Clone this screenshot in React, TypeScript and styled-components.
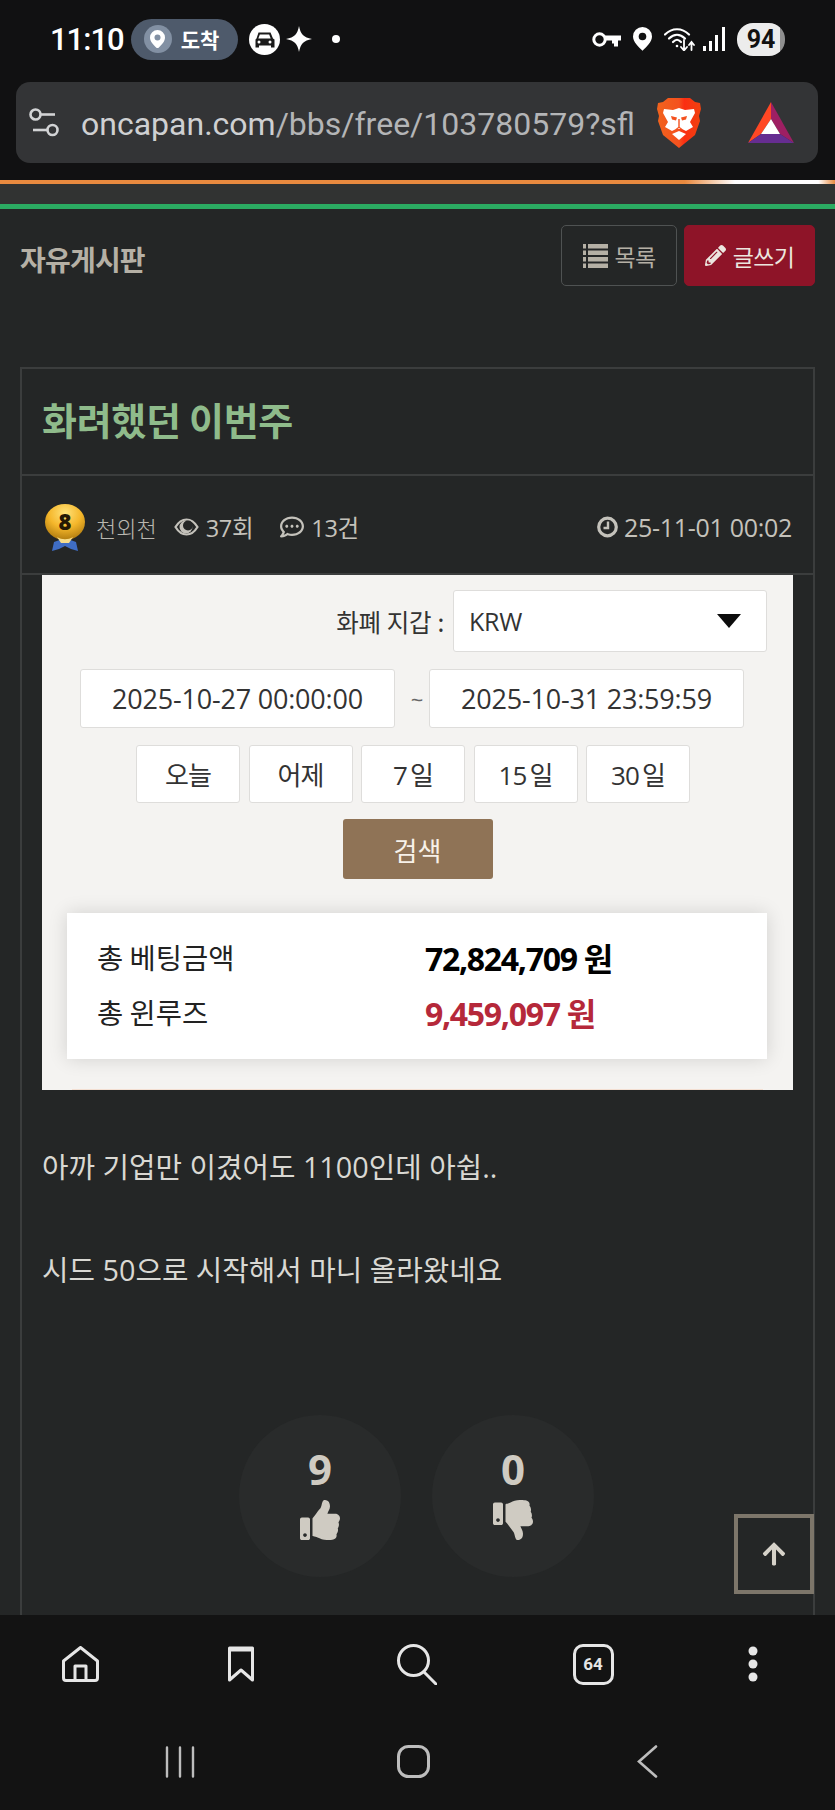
import React from 'react';
import styled, { createGlobalStyle } from 'styled-components';
import {
  FaArrowUp,
  FaPencilAlt,
  FaRegCommentDots,
  FaThumbsDown,
  FaThumbsUp,
} from 'react-icons/fa';

const sans = `"Open Sans", "Noto Sans CJK KR", sans-serif`;
const korean = `"Noto Sans CJK KR", sans-serif`;

const GlobalStyle = createGlobalStyle`
  html, body {
    margin: 0;
    padding: 0;
    background: #131313;
  }
  * {
    box-sizing: border-box;
  }
`;

const Page = styled.div`
  width: 835px;
  height: 1810px;
  display: flex;
  flex-direction: column;
  overflow: hidden;
  background: #242626;
  font-family: ${sans};
`;

/* system status bar */
const Chrome = styled.header`
  height: 180px;
  flex: none;
  background: #111112;
`;

const StatusBar = styled.div`
  height: 82px;
  padding: 0 50px 4px;
  display: flex;
  align-items: center;
  color: #fff;
`;

const Clock = styled.span`
  font-family: Roboto, sans-serif;
  font-weight: 500;
  font-size: 31px;
  letter-spacing: -1px;
  margin-right: 7px;
`;

const ArrivalPill = styled.div`
  width: 107px;
  height: 41px;
  border-radius: 21px;
  background: #4e5a6b;
  padding-left: 13px;
  display: flex;
  align-items: center;
  gap: 9px;
  font-family: ${korean};
  font-weight: 700;
  font-size: 21px;
  margin-right: 11px;
`;

const PinBubble = styled.span`
  width: 28px;
  height: 28px;
  border-radius: 50%;
  background: #8290a3;
  display: flex;
  align-items: center;
  justify-content: center;
`;

const StatusLeftIcons = styled.div`
  display: flex;
  align-items: center;
  gap: 6px;
`;

const Dot = styled.span`
  width: 8px;
  height: 8px;
  margin-left: 20px;
  border-radius: 50%;
  background: #fff;
`;

const StatusRight = styled.div`
  margin-left: auto;
  display: flex;
  align-items: center;
`;

const StatusSpacer = styled.span<{ $width: number }>`
  width: ${(p) => p.$width}px;
`;

const Battery = styled.span`
  width: 48px;
  height: 33px;
  margin-left: 12px;
  border-radius: 16px;
  background: linear-gradient(90deg, #ececec 90%, #8f8f8f 90%);
  color: #111;
  font-family: Roboto, sans-serif;
  font-weight: 700;
  font-size: 25px;
  display: flex;
  align-items: center;
  justify-content: center;
`;

/* browser address bar */
const UrlBar = styled.div`
  height: 81px;
  margin: 0 17px 0 16px;
  border-radius: 14px;
  background: #333436;
  display: flex;
  align-items: center;
  padding-left: 13px;
`;

const UrlText = styled.div`
  width: 555px;
  margin-left: 21px;
  padding-top: 2px;
  overflow: hidden;
  white-space: nowrap;
  font-family: Roboto, sans-serif;
  font-size: 32px;
  color: #b4b5b7;
`;

const UrlHost = styled.span`
  color: #cfd0d2;
`;

const BraveSlot = styled.span`
  margin-left: 21px;
  display: flex;
`;

const BatSlot = styled.span`
  margin-left: 47px;
  display: flex;
`;

const LoadLine = styled.div`
  height: 4px;
  flex: none;
  background: linear-gradient(
    90deg,
    #e98a3f 0,
    #e98a3f 82%,
    #fff 88%,
    #fff 98%,
    #e98a3f 100%
  );
`;

const SiteStrip = styled.div`
  height: 25px;
  flex: none;
  background: #313332;
  border-bottom: 5px solid #2bab62;
`;

/* board page */
const Content = styled.main`
  position: relative;
  flex: 1;
  min-height: 0;
  overflow: hidden;
  padding: 16px 20px 0;
`;

const BoardHeader = styled.div`
  display: flex;
  align-items: center;
  height: 61px;
  margin-bottom: 81px;
`;

const BoardName = styled.h2`
  margin: 0 auto 0 0;
  padding-top: 6px;
  font-family: ${korean};
  font-weight: 700;
  font-size: 28px;
  letter-spacing: -0.8px;
  color: #b5b0a5;
`;

const ActionButton = styled.a<{ $primary?: boolean }>`
  height: 61px;
  display: flex;
  align-items: center;
  justify-content: center;
  gap: 7px;
  width: ${(p) => (p.$primary ? '131px' : '116px')};
  margin-left: ${(p) => (p.$primary ? '7px' : '0')};
  border-radius: 5px;
  border: 1.5px solid ${(p) => (p.$primary ? '#8e1428' : '#4f5252')};
  background: ${(p) => (p.$primary ? '#8e1428' : 'transparent')};
  color: ${(p) => (p.$primary ? '#ece6df' : '#b5b0a5')};
  font-family: ${korean};
  font-size: 23px;
  letter-spacing: -0.7px;
`;

const PostCard = styled.article`
  width: 795px;
  min-height: 1400px;
  border: 2px solid #3b3d3d;
`;

const PostTitle = styled.h1`
  margin: 0;
  height: 107px;
  padding: 0 0 6px 20px;
  display: flex;
  align-items: center;
  border-bottom: 2px solid #3b3d3d;
  font-family: ${korean};
  font-weight: 700;
  font-size: 38px;
  letter-spacing: -0.3px;
  color: #8fbb8b;
`;

const PostMeta = styled.div`
  height: 99px;
  padding: 5px 21px 0 23px;
  display: flex;
  align-items: center;
  border-bottom: 2px solid #3b3d3d;
  color: #b9b7b0;
`;

const Author = styled.span`
  margin: 0 17px 0 11px;
  font-family: ${korean};
  font-size: 22px;
  font-weight: 300;
`;

const MetaItem = styled.span`
  display: flex;
  align-items: center;
  gap: 7px;
  margin-right: 27px;
  font-size: 23.5px;
  letter-spacing: -0.3px;
  color: #c4c2bb;
`;

const PostDate = styled(MetaItem)`
  margin: 0 0 0 auto;
  gap: 6px;
  font-size: 25px;
`;

const PostBody = styled.div`
  padding: 0 20px;
`;

/* bet history capture embedded in the post */
const Capture = styled.div`
  width: 751px;
  height: 515px;
  padding-top: 15px;
  display: flex;
  flex-direction: column;
  background: #f4f3f1;
  color: #333;
`;

const CaptureEdge = styled.div`
  height: 1px;
  margin: auto 30px 0;
  background: #f3dfd2;
`;

const WalletRow = styled.div`
  display: flex;
  align-items: center;
  justify-content: flex-end;
  gap: 9px;
  padding-right: 26px;
  font-family: ${korean};
  font-size: 24.5px;
  letter-spacing: -0.3px;
  word-spacing: 1px;
`;

const Field = styled.div`
  background: #fff;
  border: 1.5px solid #dedddb;
  border-radius: 3px;
  display: flex;
  align-items: center;
`;

const WalletSelect = styled(Field)`
  width: 314px;
  height: 62px;
  padding: 0 25px 0 15px;
  justify-content: space-between;
  font-family: ${sans};
  font-size: 25px;
`;

const SelectCaret = styled.span`
  width: 0;
  height: 0;
  border-left: 12px solid transparent;
  border-right: 12px solid transparent;
  border-top: 14px solid #0c0c0c;
`;

const DateRow = styled.div`
  display: flex;
  align-items: center;
  margin: 17px 0 0 38px;
`;

const DateField = styled(Field)`
  width: 315px;
  height: 59px;
  justify-content: center;
  font-size: 27px;
  letter-spacing: -0.2px;
`;

const Tilde = styled.span`
  width: 34px;
  padding-left: 10px;
  text-align: center;
  font-size: 22px;
  color: #666;
`;

const QuickRow = styled.div`
  display: flex;
  gap: 8.5px;
  margin: 17px 0 0 94px;
`;

const QuickButton = styled(Field)`
  width: 104px;
  height: 58px;
  justify-content: center;
  font-family: ${sans}, ${korean};
  font-size: 26px;
  letter-spacing: -0.8px;
  word-spacing: -3px;
`;

const SearchButton = styled.div`
  width: 150px;
  height: 60px;
  margin: 16px auto 0;
  border-radius: 3px;
  background: #8f7356;
  color: #f7f1e9;
  font-family: ${korean};
  font-size: 26px;
  display: flex;
  align-items: center;
  justify-content: center;
`;

const Summary = styled.div`
  width: 700px;
  height: 146px;
  margin: 34px 0 0 25px;
  padding: 16px 30px;
  background: #fff;
  box-shadow: 0 0 18px rgba(0, 0, 0, 0.14);
  display: grid;
  grid-template-columns: 328px 1fr;
  grid-auto-rows: 55px;
  align-items: center;
  color: #222;
`;

const SummaryLabel = styled.span`
  font-family: ${korean};
  font-size: 28.5px;
`;

const SummaryValue = styled.span<{ $loss?: boolean }>`
  font-weight: 700;
  font-size: 32px;
  letter-spacing: -1.3px;
  color: ${(p) => (p.$loss ? '#b5283a' : '#000')};
`;

const PostText = styled.div`
  margin-top: 51px;
  display: flex;
  flex-direction: column;
  gap: 51px;
`;

const TextLine = styled.p`
  margin: 0;
  font-size: 28.8px;
  line-height: 52px;
  color: #d9d8d3;
  white-space: nowrap;
`;

const Votes = styled.div`
  margin-top: 119px;
  padding-right: 2px;
  display: flex;
  justify-content: center;
  gap: 31px;
`;

const VoteButton = styled.div`
  width: 162px;
  height: 162px;
  border-radius: 50%;
  background: #292b2b;
  color: #cfcbc2;
  display: flex;
  flex-direction: column;
  align-items: center;
  padding-top: 26px;
  gap: 3px;
`;

const VoteCount = styled.span`
  font-weight: 700;
  font-size: 42px;
  line-height: 56px;
`;

const ScrollTop = styled.a`
  position: absolute;
  right: 21px;
  bottom: 21px;
  width: 80px;
  height: 80px;
  border: 4px solid #7d766a;
  background: #242626;
  color: #d6d2c9;
  display: flex;
  align-items: center;
  justify-content: center;
`;

/* browser toolbar and system navigation */
const BottomArea = styled.footer`
  height: 195px;
  flex: none;
  background: #131313;
  color: #e6e6e6;
`;

const Toolbar = styled.nav`
  height: 98px;
  padding-left: 58px;
  display: grid;
  grid-template-columns: 161px 176px 176px 160px 44px;
  align-items: center;
`;

const ToolbarSlot = styled.span`
  width: 44px;
  height: 44px;
  display: flex;
  align-items: center;
  justify-content: center;
`;

const TabCount = styled.span`
  width: 41px;
  height: 41px;
  border: 3px solid #e6e6e6;
  border-radius: 10px;
  font-family: Roboto, sans-serif;
  font-weight: 700;
  font-size: 17px;
  display: flex;
  align-items: center;
  justify-content: center;
`;

const SystemNav = styled.nav`
  height: 97px;
  padding: 0 168px 0 160px;
  display: flex;
  align-items: center;
  justify-content: space-between;
  color: #bdbdbd;
`;

const NavSlot = styled.span`
  width: 40px;
  display: flex;
  justify-content: center;
`;

const MapPin = ({ size = 18, color = '#fff', hole = '#8290a3' }) => (
  <svg width={size} height={size * 1.25} viewBox="0 0 20 25">
    <path d="M10 0a10 10 0 0 1 10 10c0 6-6 11-10 15C6 21 0 16 0 10A10 10 0 0 1 10 0z" fill={color} />
    <circle cx="10" cy="10" r="4" fill={hole} />
  </svg>
);

const CarBadge = () => (
  <svg width="31" height="31" viewBox="0 0 31 31">
    <circle cx="15.5" cy="15.5" r="15.5" fill="#fff" />
    <path d="M9.5 8.5h12l2.5 6 1.5 1v8h-3.5v-2h-12v2H6.500v-8l1-1z" fill="#1b1b1b" />
    <path d="M10.800 10.500h9.400l1.500 4H9.300z" fill="#fff" />
    <circle cx="10" cy="18" r="1.500" fill="#fff" />
    <circle cx="21" cy="18" r="1.500" fill="#fff" />
  </svg>
);

const Sparkle = () => (
  <svg width="26" height="26" viewBox="0 0 26 26">
    <path d="M13 0c1.500 8 4.500 11.500 13 13-8.500 1.500-11.500 5-13 13-1.500-8-4.500-11.500-13-13C8.500 11.500 11.500 8 13 0z" fill="#fff" />
  </svg>
);

const KeyIcon = () => (
  <svg width="29" height="15" viewBox="0 0 29 15">
    <circle cx="7.500" cy="7.500" r="5.700" fill="none" stroke="#fff" strokeWidth="3" />
    <path d="M13 3.500h16v5h-3v6h-4v-3h-2v-3h-7z" fill="#fff" />
  </svg>
);

const WifiIcon = () => (
  <svg width="31" height="24" viewBox="0 0 31 24" fill="none" stroke="#fff" strokeLinecap="round">
    <path d="M1 7.500C8 .5 18 .5 25 7.500" strokeWidth="2.200" />
    <path d="M5 11.500c5-5 11-5 16 0" strokeWidth="2.200" />
    <path d="M9 15c3-3 5-3 8 0" strokeWidth="2.200" />
    <circle cx="13" cy="19" r="1.300" fill="#fff" stroke="none" />
    <path d="M20 13v10m-3-3 3 3.500 3-3.500M27.500 23V15m-2.500 3 2.500-3 2.500 3" strokeWidth="1.800" />
  </svg>
);

const SignalIcon = () => (
  <svg width="22" height="24" viewBox="0 0 22 24" fill="#fff">
    <rect x="0" y="19" width="3" height="5" />
    <rect x="6" y="14" width="3" height="10" />
    <rect x="12" y="8" width="3" height="16" />
    <rect x="19" y="0" width="3" height="24" />
  </svg>
);

const TuneIcon = () => (
  <svg width="31" height="29" viewBox="0 0 31 29" fill="none" stroke="#d2d3d5" strokeWidth="2.600">
    <circle cx="6.500" cy="6.500" r="5" />
    <path d="M12 6.500h14" />
    <circle cx="23.500" cy="22" r="5" />
    <path d="M4 22h14" />
  </svg>
);

const BraveLogo = () => (
  <svg width="44" height="51" viewBox="0 0 44 51">
    <defs>
      <linearGradient id="braveShield" x1="0" x2="1" y1="0" y2="0">
        <stop offset="0" stopColor="#f1631d" />
        <stop offset="0.5" stopColor="#f4511e" />
        <stop offset="0.62" stopColor="#fb2e12" />
        <stop offset="1" stopColor="#f0420f" />
      </linearGradient>
    </defs>
    <path d="M11 1h22l5 4 5 1 1 6-2 7 1 5-5 14-16 13L6 38 1 24l1-5-2-7 1-6 5-1z" fill="url(#braveShield)" />
    {/* lion face */}
    <path d="M7 12l9 1 6-2 6 2 9-1 1 4-5 9 3 5-7 4-4-2h-6l-4 2-7-4 3-5-5-9z" fill="#fff" />
    <path d="M14 19l6 1.500-1 3-4-1zM30 19l-6 1.500 1 3 4-1z" fill="#f4511e" />
    <path d="M21.300 22h1.400v8l3.300 2.500h-1.800L22 31l-2.200 1.500H18l3.300-2.500z" fill="#f4511e" />
    <path d="M15 37l7-3 7 3-7 6z" fill="#fff" />
  </svg>
);

const BatLogo = () => (
  <svg width="46" height="41" viewBox="0 0 46 41">
    <polygon points="23,0 0,41 13,32 23,17" fill="#ff4724" />
    <polygon points="23,0 23,17 32,32 46,41" fill="#9e1f63" />
    <polygon points="0,41 13,32 32,32 46,41" fill="#662d91" />
    <polygon points="23,17 13,32 32,32" fill="#fff" />
  </svg>
);

const ListBars = () => (
  <svg width="25" height="24" viewBox="0 0 25 24" fill="currentColor">
    {[0, 6.5, 13, 19.5].map((y) => (
      <g key={y}>
        <rect x="0" y={y} width="3" height="4.500" />
        <rect x="5" y={y} width="20" height="4.500" />
      </g>
    ))}
  </svg>
);

const ClockIcon = () => (
  <svg width="21" height="22" viewBox="0 0 21 22" fill="none" stroke="currentColor">
    <circle cx="10.500" cy="11" r="8.800" strokeWidth="3.200" />
    <path d="M11 5.500V12H6.500" strokeWidth="2.400" />
  </svg>
);

const EyeIcon = () => (
  <svg width="25" height="18" viewBox="0 0 25 18">
    <path d="M1.500 9C4.500 4 8 1.500 12.500 1.500S20.500 4 23.500 9c-3 5-6.500 7.500-11 7.500S4.500 14 1.500 9z" fill="none" stroke="currentColor" strokeWidth="2.200" />
    <circle cx="12" cy="9" r="6.500" fill="currentColor" />
    <circle cx="14" cy="7.500" r="5" fill="#242626" />
  </svg>
);

const Medal = () => (
  <svg width="40" height="47" viewBox="0 0 40 47">
    <defs>
      <radialGradient id="medalGold" cx="0.5" cy="0.25" r="0.8">
        <stop offset="0" stopColor="#ffe27a" />
        <stop offset="0.5" stopColor="#f5b72b" />
        <stop offset="1" stopColor="#a8740c" />
      </radialGradient>
    </defs>
    <path d="M7 47l2-9 11-4 11 4 2 9-7-2-6-3-6 3z" fill="#3f6dc4" />
    <ellipse cx="20" cy="18" rx="20" ry="18" fill="url(#medalGold)" />
    <path d="M12 33c5 3 11 3 16 0l-4 6h-8z" fill="#f7dc8b" />
    <text x="20" y="26" textAnchor="middle" fontFamily="Open Sans" fontWeight="800" fontSize="22" fill="#241804">
      8
    </text>
  </svg>
);

const HomeIcon = () => (
  <svg width="37" height="36" viewBox="0 0 37 36" fill="none" stroke="currentColor" strokeWidth="3" strokeLinejoin="round">
    <path d="M18.500 1.500 35.500 15v17a2.500 2.500 0 0 1-2.500 2.500H4A2.500 2.500 0 0 1 1.500 32V15z" />
    <path d="M13 34.500V20h11v14.500" />
  </svg>
);

const BookmarkIcon = () => (
  <svg width="26" height="36" viewBox="0 0 26 36" fill="none" stroke="currentColor" strokeWidth="3" strokeLinejoin="round">
    <path d="M1.500 2h23v32L13 24 1.500 34z" />
    <path d="M1.500 4h23" />
  </svg>
);

const SearchIcon = () => (
  <svg width="40" height="41" viewBox="0 0 40 41" fill="none" stroke="currentColor" strokeWidth="3" strokeLinecap="round">
    <circle cx="16.500" cy="16.500" r="15" />
    <path d="M27 28l12 12" />
  </svg>
);

const MoreIcon = () => (
  <svg width="10" height="36" viewBox="0 0 10 36" fill="currentColor">
    <circle cx="5" cy="5" r="4.500" />
    <circle cx="5" cy="18" r="4.500" />
    <circle cx="5" cy="31" r="4.500" />
  </svg>
);

const RecentsIcon = () => (
  <svg width="30" height="32" viewBox="0 0 30 32" stroke="currentColor" strokeWidth="2.400" strokeLinecap="round">
    <path d="M2 1.500v29M15 1.500v29M28 1.500v29" />
  </svg>
);

const HomeNavIcon = () => (
  <svg width="33" height="33" viewBox="0 0 33 33" fill="none" stroke="currentColor" strokeWidth="3">
    <rect x="1.500" y="1.500" width="30" height="30" rx="10" />
  </svg>
);

const BackIcon = () => (
  <svg width="21" height="33" viewBox="0 0 21 33" fill="none" stroke="currentColor" strokeWidth="2.600" strokeLinecap="round">
    <path d="M19 1.500 2 16.500l17 15" />
  </svg>
);

const quickRanges = ['오늘', '어제', '7 일', '15 일', '30 일'];

export default function App() {
  return (
    <Page>
      <GlobalStyle />
      <Chrome>
        <StatusBar>
          <Clock>11:10</Clock>
          <ArrivalPill>
            <PinBubble>
              <MapPin size={15} />
            </PinBubble>
            도착
          </ArrivalPill>
          <StatusLeftIcons>
            <CarBadge />
            <Sparkle />
          </StatusLeftIcons>
          <Dot />
          <StatusRight>
            <KeyIcon />
            <StatusSpacer $width={12} />
            <MapPin size={19} hole="#111112" />
            <StatusSpacer $width={12} />
            <WifiIcon />
            <StatusSpacer $width={8} />
            <SignalIcon />
            <Battery>94</Battery>
          </StatusRight>
        </StatusBar>
        <UrlBar>
          <TuneIcon />
          <UrlText>
            <UrlHost>oncapan.com</UrlHost>/bbs/free/103780579?sfl
          </UrlText>
          <BraveSlot>
            <BraveLogo />
          </BraveSlot>
          <BatSlot>
            <BatLogo />
          </BatSlot>
        </UrlBar>
      </Chrome>
      <LoadLine />
      <SiteStrip />
      <Content>
        <BoardHeader>
          <BoardName>자유게시판</BoardName>
          <ActionButton>
            <ListBars />
            목록
          </ActionButton>
          <ActionButton $primary>
            <FaPencilAlt size={21} />
            글쓰기
          </ActionButton>
        </BoardHeader>
        <PostCard>
          <PostTitle>화려했던 이번주</PostTitle>
          <PostMeta>
            <Medal />
            <Author>천외천</Author>
            <MetaItem>
              <EyeIcon />
              37회
            </MetaItem>
            <MetaItem>
              <FaRegCommentDots size={24} />
              13건
            </MetaItem>
            <PostDate>
              <ClockIcon />
              25-11-01 00:02
            </PostDate>
          </PostMeta>
          <PostBody>
            <Capture>
              <WalletRow>
                화폐 지갑 :
                <WalletSelect>
                  KRW
                  <SelectCaret />
                </WalletSelect>
              </WalletRow>
              <DateRow>
                <DateField>2025-10-27 00:00:00</DateField>
                <Tilde>~</Tilde>
                <DateField>2025-10-31 23:59:59</DateField>
              </DateRow>
              <QuickRow>
                {quickRanges.map((label) => (
                  <QuickButton key={label}>{label}</QuickButton>
                ))}
              </QuickRow>
              <SearchButton>검색</SearchButton>
              <Summary>
                <SummaryLabel>총 베팅금액</SummaryLabel>
                <SummaryValue>72,824,709 원</SummaryValue>
                <SummaryLabel>총 윈루즈</SummaryLabel>
                <SummaryValue $loss>9,459,097 원</SummaryValue>
              </Summary>
              <CaptureEdge />
            </Capture>
            <PostText>
              <TextLine>아까 기업만 이겼어도 1100인데 아쉽..</TextLine>
              <TextLine>시드 50으로 시작해서 마니 올라왔네요</TextLine>
            </PostText>
            <Votes>
              <VoteButton>
                <VoteCount>9</VoteCount>
                <FaThumbsUp size={40} />
              </VoteButton>
              <VoteButton>
                <VoteCount>0</VoteCount>
                <FaThumbsDown size={40} />
              </VoteButton>
            </Votes>
          </PostBody>
        </PostCard>
        <ScrollTop>
          <FaArrowUp size={26} />
        </ScrollTop>
      </Content>
      <BottomArea>
        <Toolbar>
          <ToolbarSlot>
            <HomeIcon />
          </ToolbarSlot>
          <ToolbarSlot>
            <BookmarkIcon />
          </ToolbarSlot>
          <ToolbarSlot>
            <SearchIcon />
          </ToolbarSlot>
          <ToolbarSlot>
            <TabCount>64</TabCount>
          </ToolbarSlot>
          <ToolbarSlot>
            <MoreIcon />
          </ToolbarSlot>
        </Toolbar>
        <SystemNav>
          <NavSlot>
            <RecentsIcon />
          </NavSlot>
          <NavSlot>
            <HomeNavIcon />
          </NavSlot>
          <NavSlot>
            <BackIcon />
          </NavSlot>
        </SystemNav>
      </BottomArea>
    </Page>
  );
}
